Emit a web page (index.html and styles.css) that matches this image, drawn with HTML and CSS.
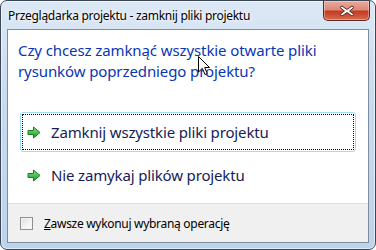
FILE: index.html
```html
<!DOCTYPE html>
<html lang="pl">
<head>
<meta charset="utf-8">
<title>Przeglądarka projektu</title>
<link rel="stylesheet" href="styles.css">
</head>
<body>
<div class="window">
  <div class="titlebar">
    <span class="title">Przeglądarka projektu - zamknij pliki projektu</span>
    <div class="close">
      <svg width="16" height="12" viewBox="0 0 16 12"><path d="M3 1 L8 4.5 L13 1 L15 2.5 L10.5 6 L15 9.5 L13 11 L8 7.5 L3 11 L1 9.5 L5.5 6 L1 2.5 Z" fill="#fff" stroke="#5b2a24" stroke-width="1" stroke-linejoin="round"/></svg>
    </div>
  </div>
  <div class="client">
    <div class="content">
      <p class="instruction">Czy chcesz zamknąć wszystkie otwarte pliki rysunków poprzedniego projektu?</p>
      <div class="commands">
        <div class="cmd focused">
          <svg class="arrow" width="14" height="13" viewBox="0 0 14 13"><defs><linearGradient id="g1" x1="0" y1="0" x2="0" y2="1"><stop offset="0" stop-color="#8ae686"/><stop offset="1" stop-color="#0f9a1d"/></linearGradient></defs><path d="M1 4.5 H6.5 V1 L13 6.5 L6.5 12 V8.5 H1 Z" fill="url(#g1)" stroke="#1b7d25" stroke-width="1" stroke-linejoin="round"/></svg>
          <span>Zamknij wszystkie pliki projektu</span>
        </div>
        <div class="cmd">
          <svg class="arrow" width="14" height="13" viewBox="0 0 14 13"><defs><linearGradient id="g2" x1="0" y1="0" x2="0" y2="1"><stop offset="0" stop-color="#8ae686"/><stop offset="1" stop-color="#0f9a1d"/></linearGradient></defs><path d="M1 4.5 H6.5 V1 L13 6.5 L6.5 12 V8.5 H1 Z" fill="url(#g2)" stroke="#1b7d25" stroke-width="1" stroke-linejoin="round"/></svg>
          <span>Nie zamykaj plików projektu</span>
        </div>
      </div>
    </div>
    <div class="footer">
      <span class="checkbox"></span>
      <span class="label"><u>Z</u>awsze wykonuj wybraną operację</span>
    </div>
  </div>
  <svg class="cursor" width="13" height="20" viewBox="0 0 13 20"><path d="M0.5 0.5 V16 L4.3 12.3 L7 18.5 L9.3 17.5 L6.7 11.5 H11.5 Z" fill="#fff" stroke="#000" stroke-width="1" stroke-linejoin="round"/></svg>
</div>
</body>
</html>
```
FILE: styles.css
```css
html, body {
  margin: 0;
  padding: 0;
  background: #fff;
}
.window {
  position: relative;
  width: 376px;
  height: 250px;
  box-sizing: border-box;
  border: 1px solid #3a4656;
  border-radius: 7px;
  background: linear-gradient(to bottom, #dce8f5 0%, #c9dbef 40%, #bcd3ec 100%);
  display: flex;
  flex-direction: column;
  padding: 0 6px 6px 6px;
  box-shadow: inset 0 0 0 1px rgba(255,255,255,0.6);
  font-family: "Noto Sans", "Open Sans", sans-serif;
}
.titlebar {
  height: 28px;
  display: flex;
  align-items: flex-start;
  justify-content: space-between;
  flex: none;
}
.title {
  font-size: 12px;
  color: #000;
  margin-top: 6px;
  margin-left: 1px;
  letter-spacing: -0.28px;
  text-shadow: 0 0 6px #fff, 0 0 3px #fff;
}
.close {
  width: 47px;
  height: 20px;
  margin-right: -1px;
  box-sizing: border-box;
  border: 1px solid #5b2a24;
  border-top: none;
  border-radius: 0 0 5px 5px;
  background: linear-gradient(to bottom, #e9aa9c 0%, #dd8a78 45%, #c53a22 55%, #d66b4f 100%);
  box-shadow: inset 0 0 0 1px rgba(255,255,255,0.35);
  display: flex;
  align-items: center;
  justify-content: center;
}
.close svg { display: block; }
.client {
  flex: 1;
  border: 1px solid #7e8c9c;
  background: #fff;
  display: flex;
  flex-direction: column;
}
.content {
  flex: 1;
  padding: 10px 12px 0 12px;
}
.instruction {
  margin: 0 0 0 -2px;
  font-size: 15px;
  line-height: 21px;
  color: #0a36b4;
  width: 310px;
  letter-spacing: -0.1px;
}
.commands {
  margin-top: 30px;
  display: flex;
  flex-direction: column;
  gap: 3px;
}
.cmd {
  height: 40px;
  box-sizing: border-box;
  border: 1px solid transparent;
  border-radius: 3px;
  display: flex;
  align-items: center;
  padding-left: 6px;
  color: #151c58;
  font-size: 15px;
  letter-spacing: -0.15px;
}
.cmd.focused {
  border-color: #9fdcf4;
  outline: 1px dotted #000;
  outline-offset: -3px;
}
.arrow {
  display: block;
  flex: none;
  margin-right: 10px;
}
.footer {
  height: 38px;
  flex: none;
  background: #f0f0f0;
  border-top: 1px solid #dfdfdf;
  display: flex;
  align-items: center;
  padding-left: 12px;
  font-size: 12px;
  color: #000;
}
.checkbox {
  width: 13px;
  height: 13px;
  box-sizing: border-box;
  border: 1px solid #8e8f8f;
  background: linear-gradient(135deg, #dcdcdc 0%, #f4f4f4 60%, #fff 100%);
  box-shadow: inset 0 0 0 1px #f4f4f4;
  margin-right: 11px;
  margin-top: 1px;
}
.label {
  letter-spacing: -0.3px;
}
.cursor {
  position: absolute;
  left: 197px;
  top: 55px;
}
```
